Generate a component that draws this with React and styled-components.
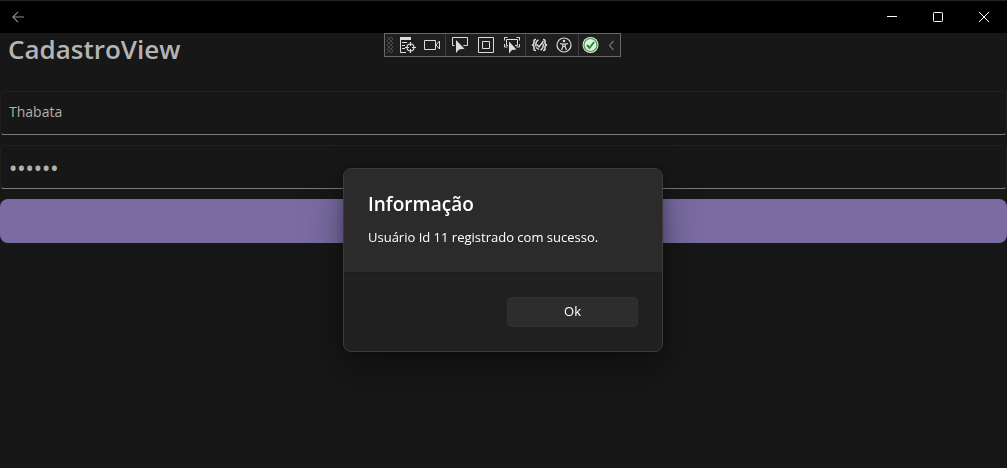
import React from "react";
import styled, { createGlobalStyle } from "styled-components";

const GlobalStyle = createGlobalStyle`
  * { box-sizing: border-box; }
  body {
    margin: 0;
    background: #171717;
    font-family: "Open Sans", "Noto Sans", sans-serif;
  }
  button, input { font: inherit; }
`;

const Page = styled.div`
  min-height: 100vh;
  display: flex;
  flex-direction: column;
  background: #171717;
`;

const TitleBar = styled.header`
  display: flex;
  justify-content: space-between;
  height: 33px;
  background: #000;
  border-top: 1px solid #232525;
`;

const CaptionGroup = styled.div`
  display: flex;
`;

const CaptionButton = styled.button`
  display: flex;
  align-items: center;
  justify-content: center;
  width: ${(p) => (p.$narrow ? "36px" : "46px")};
  padding: 0;
  border: 0;
  background: transparent;
  color: ${(p) => (p.$narrow ? "#8f8f8f" : "#fff")};
`;

const Content = styled.main`
  display: flex;
  flex-direction: column;
  gap: 10px;
`;

const Heading = styled.h1`
  height: 48px;
  margin: 0;
  padding: 0 8px;
  color: #b4b4b4;
  font-size: 26px;
  font-weight: 600;
  line-height: 32px;
`;

const Field = styled.input`
  display: block;
  width: 100%;
  height: 44px;
  padding: 0 8px 4px;
  border: 1px solid #202020;
  border-bottom-color: #7a7a7a;
  border-radius: 4px;
  outline: 0;
  background: #171717;
  color: #b0b0b0;
  font-size: 14px;
`;

const PasswordField = styled(Field)`
  padding-bottom: 0;
  font-family: "Noto Sans", sans-serif;
  font-size: 22px;
`;

const SubmitButton = styled.button`
  height: 44px;
  border: 0;
  border-radius: 8px;
  background: #7a6ca3;
`;

const DebugBar = styled.div`
  position: absolute;
  top: 33px;
  left: calc(50% - 120px);
  display: flex;
  align-items: stretch;
  height: 24px;
  border: 1px solid #686868;
  background: #1f1f1f;
  color: #dcdcdc;
`;

const Grip = styled.span`
  width: 6px;
  margin: 3px 1px 3px 2px;
  background-image: radial-gradient(circle, #484848 1px, transparent 1px),
    radial-gradient(circle, #484848 1px, transparent 1px);
  background-size: 4px 4px;
  background-position: 0 0, 2px 2px;
`;

const ToolGroup = styled.div`
  display: flex;
  gap: ${(p) => p.$gap || 0}px;
`;

const Separator = styled.span`
  width: 1px;
  margin: 0 1px;
  background: #3d3d3d;
`;

const ToolButton = styled.button`
  display: flex;
  align-items: center;
  justify-content: center;
  width: ${(p) => p.$width || 25}px;
  padding: 0;
  border: 0;
  background: transparent;
  color: ${(p) => (p.$dim ? "#6e6e6e" : "inherit")};
`;

const ToolSvg = styled.svg`
  display: block;
  flex: none;
  width: 17px;
  height: 18px;
  overflow: visible;
  fill: none;
  stroke: currentColor;
`;

const Overlay = styled.div`
  position: fixed;
  inset: 0;
  display: flex;
  align-items: center;
  justify-content: center;
  padding: 52px 1px 0 0;
`;

const Dialog = styled.section`
  width: 320px;
  border: 1px solid #3b3b3b;
  border-radius: 8px;
  overflow: hidden;
  background: #202020;
  color: #fff;
  box-shadow: 0 16px 40px rgba(0, 0, 0, 0.4), 0 0 12px rgba(0, 0, 0, 0.25);
`;

const DialogBody = styled.div`
  height: 104px;
  padding: 20px 24px 0;
  border-bottom: 1px solid #1c1c1c;
  background: #2b2b2b;
`;

const DialogTitle = styled.h2`
  margin: 0 0 8px;
  font-size: 19px;
  font-weight: 600;
  line-height: 30px;
`;

const DialogText = styled.p`
  margin: 0;
  font-size: 13px;
  line-height: 20px;
  white-space: nowrap;
`;

const DialogFooter = styled.div`
  display: flex;
  justify-content: flex-end;
  padding: 24px;
`;

const OkButton = styled.button`
  width: 131px;
  height: 30px;
  padding: 0 0 2px;
  border: 1px solid #323232;
  border-radius: 4px;
  background: #2d2d2d;
  color: #fff;
  font-size: 13px;
  line-height: 20px;
`;

const Tool = ({ label, children, width, dim }) => (
  <ToolButton type="button" aria-label={label} $width={width} $dim={dim}>
    <ToolSvg viewBox="0 0 17 18" aria-hidden="true">{children}</ToolSvg>
  </ToolButton>
);

const DebugToolbar = () => (
  <DebugBar role="toolbar" aria-label="Debug">
    <Grip />
    <ToolGroup>
      <Tool label="Live visual tree">
        <path d="M2 1h11v3H2z" fill="currentColor" stroke="none" />
        <path d="M2.5 3v13.5H8M4 6.5h5M4 9.5h3M4 12.5h3" />
        <circle cx="12.5" cy="11.5" r="3.5" strokeWidth="1.2" />
        <path d="M12.5 6v4M12.5 13v4M7 11.5h4M14 11.5h4" strokeWidth="1.2" />
      </Tool>
      <Tool label="Record">
        <path d="M1.5 4.5h11v9h-11zM13 9l3.5-4v8z" />
      </Tool>
    </ToolGroup>
    <Separator />
    <ToolGroup $gap={1}>
      <Tool label="Select element">
        <path d="M3.5 9.5h-2v-8h15v8h-4" />
        <path d="M5 4v13l3-3.500 5.500-.8z" fill="currentColor" stroke="none" />
      </Tool>
      <Tool label="Display layout adorners">
        <path d="M1.5 1.5h15v15h-15zM5.5 5.5h7v7h-7z" />
      </Tool>
      <Tool label="Track focused element">
        <path d="M1.5 4.5v-3h3M13.5 1.5h3v3M16.5 8v3h-3M1.5 8v3h3M5 9.500H3.5v-6h11v6H12" />
        <path d="M6 5.5v12l3-3.500 4.500-.5z" fill="currentColor" stroke="none" />
      </Tool>
    </ToolGroup>
    <Separator />
    <ToolGroup>
      <Tool label="Hot reload settings">
        <path d="M5 3.5C2.500 3.5 3 5 3 7S1.500 8.500 1.500 9 3 9 3 11s-.5 3.500 2 3.500M12 3.500c2.500 0 2 1.500 2 3.500s1.500 1.500 1.500 2-1.500 0-1.500 2 .5 3.500-2 3.500" strokeWidth="1.6" />
        <path d="M7.500 4C5 5 4.500 7 4.800 10.500M9.500 14c2.500-1 3-3 2.700-6.500M5.800 8.500 8 11l4.500-6M5 11.500l3 2" strokeWidth="1.4" />
      </Tool>
      <Tool label="Accessibility checker">
        <circle cx="8" cy="9" r="7" strokeWidth="1.2" />
        <circle cx="8" cy="5" r="1.3" fill="currentColor" stroke="none" />
        <path d="M4 7.500l2.500.7h3l2.500-.7M6.800 8v3L5.500 14M9.200 8v3l1.300 3M6.500 10.500h3" strokeWidth="1.2" />
      </Tool>
    </ToolGroup>
    <Separator />
    <ToolGroup>
      <Tool label="Hot reload status" width={21}>
        <circle cx="8.5" cy="9" r="8" fill="#e4eee4" stroke="none" />
        <circle cx="8.5" cy="9" r="6.5" stroke="#339b3c" strokeWidth="1.2" />
        <path d="M5 9l2.500 3L12 6" stroke="#258c31" strokeWidth="2" />
      </Tool>
      <Tool label="Collapse toolbar" width={19} dim>
        <path d="M11.500 5l-4 4.500 4 4.500" strokeWidth="1.3" />
      </Tool>
    </ToolGroup>
  </DebugBar>
);

export default function App() {
  return (
    <Page>
      <GlobalStyle />
      <TitleBar>
        <CaptionButton type="button" aria-label="Voltar" $narrow>
          <svg width="12" height="12" viewBox="0 0 12 12" fill="none" stroke="currentColor" strokeWidth="1.1">
            <path d="M12 6H.8M6 .8.8 6 6 11.200" />
          </svg>
        </CaptionButton>
        <CaptionGroup>
          <CaptionButton type="button" aria-label="Minimizar">
            <svg width="10" height="10" viewBox="0 0 10 10" stroke="currentColor">
              <path d="M0 4.500h10" />
            </svg>
          </CaptionButton>
          <CaptionButton type="button" aria-label="Maximizar">
            <svg width="10" height="10" viewBox="0 0 10 10" fill="none" stroke="currentColor">
              <rect x=".5" y=".5" width="9" height="9" rx=".8" />
            </svg>
          </CaptionButton>
          <CaptionButton type="button" aria-label="Fechar">
            <svg width="10" height="10" viewBox="0 0 10 10" fill="none" stroke="currentColor">
              <path d="M0 0l10 10M10 0L0 10" />
            </svg>
          </CaptionButton>
        </CaptionGroup>
      </TitleBar>
      <Content>
        <Heading>CadastroView</Heading>
        <Field type="text" aria-label="Nome" defaultValue="Thabata" />
        <PasswordField type="password" aria-label="Senha" defaultValue="123456" />
        <SubmitButton type="button" aria-label="Cadastrar" />
      </Content>
      <DebugToolbar />
      <Overlay>
        <Dialog role="dialog" aria-modal="true" aria-labelledby="dialog-title">
          <DialogBody>
            <DialogTitle id="dialog-title">Informação</DialogTitle>
            <DialogText>Usuário Id 11 registrado com sucesso.</DialogText>
          </DialogBody>
          <DialogFooter>
            <OkButton type="button">Ok</OkButton>
          </DialogFooter>
        </Dialog>
      </Overlay>
    </Page>
  );
}
